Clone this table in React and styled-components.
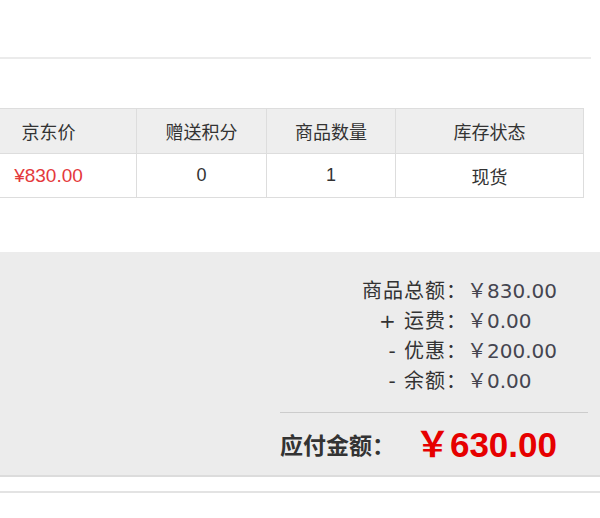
import { Fragment } from "react";
import styled, { createGlobalStyle } from "styled-components";

const GlobalStyle = createGlobalStyle`
  body {
    margin: 0;
    background: #fff;
    font-family: "Liberation Sans", "Noto Sans CJK SC", sans-serif;
    color: #333;
    overflow: hidden;
  }
`;

const Page = styled.div`
  width: 600px;
  height: 518px;
  overflow: hidden;
`;

const TopBar = styled.div`
  width: 591px;
  height: 57px;
  border-bottom: 2px solid #ebebeb;
`;

const Table = styled.table`
  margin: 49px 0 0 -40px;
  width: 623px;
  table-layout: fixed;
  border-collapse: collapse;
  font-size: 18px;
`;

const HeadCell = styled.th`
  height: 44px;
  padding: 0;
  background: #eeeeee;
  border: 1px solid #dddddd;
  font-weight: normal;
  color: #333;
  text-align: center;
`;

const Cell = styled.td`
  height: 43px;
  padding: 0;
  border: 1px solid #dddddd;
  text-align: center;
  font-size: ${(p) => (p.$price ? "19px" : "18px")};
  color: ${(p) => (p.$price ? "#e4393c" : "#333")};
`;

const Panel = styled.div`
  margin-top: 54px;
  height: 225px;
  background: #ececec;
  border-bottom: 2px solid #dcdcdc;
  display: flex;
  flex-direction: column;
  align-items: flex-end;
  box-sizing: border-box;
`;

const Summary = styled.div`
  display: grid;
  grid-template-columns: auto auto;
  padding-top: 24px;
  margin-right: 43px;
  font-family: "DejaVu Sans", "Noto Sans CJK SC", sans-serif;
  font-size: 20px;
  line-height: 30px;
`;

const Label = styled.span`
  text-align: right;
  color: #333;
  letter-spacing: 1px;
`;

const Value = styled.span`
  color: #454550;
`;

const Divider = styled.div`
  width: 308px;
  margin: 16px 12px 0 0;
  border-top: 1px solid #cccccc;
`;

const TotalRow = styled.div`
  width: 277px;
  height: 64px;
  margin-right: 43px;
  display: flex;
  align-items: center;
  justify-content: space-between;
`;

const TotalLabel = styled.span`
  font-size: 23px;
  font-weight: bold;
  color: #333;
  font-family: "Noto Sans CJK SC", sans-serif;
`;

const TotalValue = styled.span`
  font-size: 35px;
  font-weight: bold;
  color: #e60000;
  line-height: 1;
`;

const BottomLine = styled.div`
  margin-top: 14px;
  border-top: 2px solid #e3e3e3;
`;

const headers = ["京东价", "赠送积分", "商品数量", "库存状态"];
const widths = [176, 130, 129, 188];

const lines = [
  { label: "商品总额：", value: "￥830.00" },
  { label: "+ 运费：", value: "￥0.00" },
  { label: "- 优惠：", value: "￥200.00" },
  { label: "- 余额：", value: "￥0.00" },
];

const App = () => {
  return (
    <Page>
      <GlobalStyle />
      <TopBar />
      <Table>
        <colgroup>
          {widths.map((w, i) => (
            <col key={i} style={{ width: w }} />
          ))}
        </colgroup>
        <thead>
          <tr>
            {headers.map((h) => (
              <HeadCell key={h}>{h}</HeadCell>
            ))}
          </tr>
        </thead>
        <tbody>
          <tr>
            <Cell $price>¥830.00</Cell>
            <Cell>0</Cell>
            <Cell>1</Cell>
            <Cell>现货</Cell>
          </tr>
        </tbody>
      </Table>
      <Panel>
        <Summary>
          {lines.map((l) => (
            <Fragment key={l.label}>
              <Label>{l.label}</Label>
              <Value>{l.value}</Value>
            </Fragment>
          ))}
        </Summary>
        <Divider />
        <TotalRow>
          <TotalLabel>应付金额：</TotalLabel>
          <TotalValue>￥630.00</TotalValue>
        </TotalRow>
      </Panel>
      <BottomLine />
    </Page>
  );
};

export default App;
